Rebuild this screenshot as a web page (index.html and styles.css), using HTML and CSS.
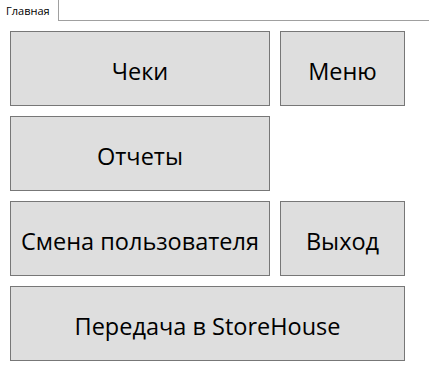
FILE: index.html
```html
<!DOCTYPE html>
<html lang="ru">
<head>
    <meta charset="UTF-8">
    <title>Главная</title>
    <link rel="stylesheet" href="styles.css">
</head>
<body>
    <div class="tabs">
        <div class="tab">Главная</div>
        <div class="tab-rest"></div>
    </div>
    <div class="grid">
        <button class="btn wide">Чеки</button>
        <button class="btn">Меню</button>
        <button class="btn wide">Отчеты</button>
        <div></div>
        <button class="btn wide">Смена пользователя</button>
        <button class="btn">Выход</button>
        <button class="btn full">Передача в StoreHouse</button>
    </div>
</body>
</html>
```
FILE: styles.css
```css
*{
    margin: 0;
    padding: 0;
    box-sizing: border-box;
}
html,body{
    width: 100%;
    height: 100%;
    background: #fff;
    font-family: "Open Sans", "Noto Sans", sans-serif;
    overflow: hidden;
}
.tabs{
    display: flex;
    height: 21px;
    padding-right: 2px;
}
.tab{
    width: 59px;
    padding: 3px 0 0 6px;
    font-size: 11px;
    color: #000;
    border-right: 1px solid #a0a0a0;
}
.tab-rest{
    flex: 1;
    border-bottom: 1px solid #a0a0a0;
}
.grid{
    display: grid;
    grid-template-columns: 260px 125px;
    grid-auto-rows: 75px;
    column-gap: 10px;
    row-gap: 10px;
    padding: 10px 0 0 10px;
}
.btn{
    display: flex;
    align-items: center;
    justify-content: center;
    padding-top: 4px;
    background: #dedede;
    border: 1px solid #777;
    font-family: "Open Sans", "Noto Sans", sans-serif;
    font-size: 23.5px;
    color: #000;
}
.full{
    grid-column: 1 / 3;
}
```
